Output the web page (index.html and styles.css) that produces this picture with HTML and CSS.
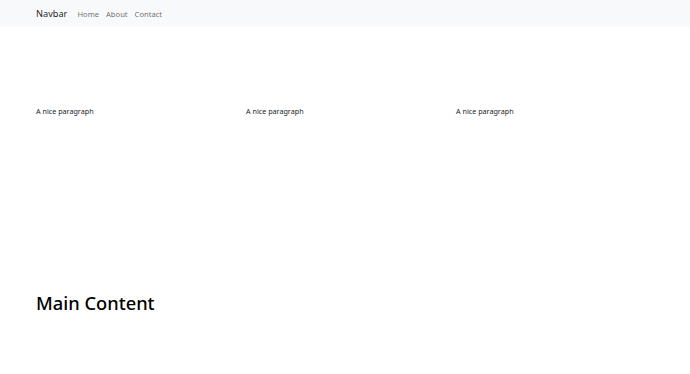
FILE: index.html
```html
<!DOCTYPE html>
<html lang="en">
<head>
  <meta charset="UTF-8">
  <title>Navbar</title>
  <link rel="stylesheet" href="styles.css">
</head>
<body>
  <nav class="navbar">
    <div class="container nav-inner">
      <a class="brand" href="#">Navbar</a>
      <a class="nav-link" href="#">Home</a>
      <a class="nav-link" href="#">About</a>
      <a class="nav-link" href="#">Contact</a>
    </div>
  </nav>

  <div class="container">
    <div class="row">
      <div class="col"><p>A nice paragraph</p></div>
      <div class="col"><p>A nice paragraph</p></div>
      <div class="col"><p>A nice paragraph</p></div>
    </div>
    <h1 class="main-title">Main Content</h1>
  </div>
</body>
</html>
```

FILE: styles.css
```css
body {
  margin: 0;
  font-family: "Noto Sans", "Open Sans", sans-serif;
  color: #212529;
  background-color: #fff;
}
a {
  text-decoration: none;
}
.container {
  padding: 0 36px;
}
.navbar {
  background-color: #f8f9fa;
  height: 27px;
}
.nav-inner {
  display: flex;
  align-items: center;
  height: 100%;
}
.brand {
  font-size: 9.2px;
  color: rgba(0, 0, 0, 0.9);
  margin-right: 10px;
}
.nav-link {
  font-size: 7.6px;
  color: rgba(0, 0, 0, 0.6);
  margin-right: 7px;
}
.row {
  display: grid;
  grid-template-columns: repeat(3, 210px);
  padding-top: 79px;
}
.col p {
  margin: 0;
  font-size: 7.2px;
  line-height: 1.5;
}
.main-title {
  margin: 175px 0 0;
  font-size: 18.3px;
  font-weight: 500;
  line-height: 1.2;
  color: #000;
}
```
